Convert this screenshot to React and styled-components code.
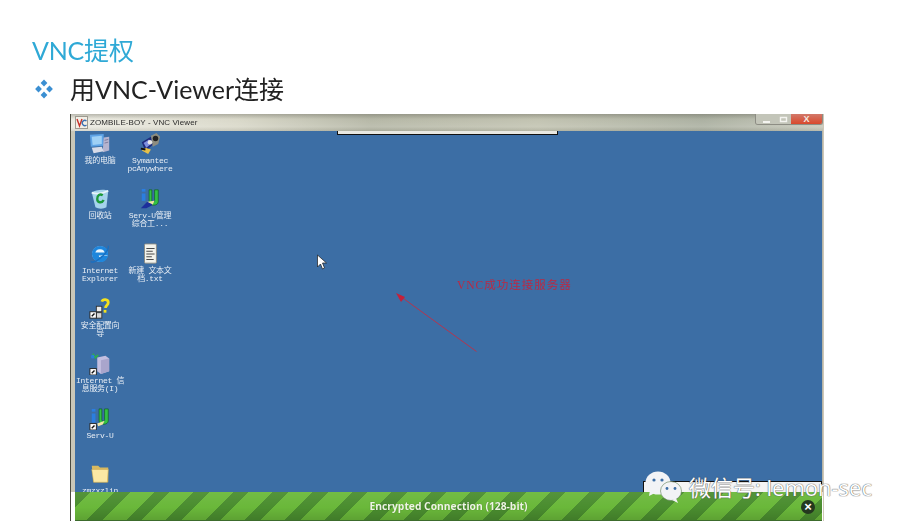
import React from 'react';
import styled, { createGlobalStyle } from 'styled-components';

const Global = createGlobalStyle`
  html, body { margin: 0; padding: 0; background: #fff; width: 900px; height: 528px; overflow: hidden; }
  #root { width: 900px; height: 528px; }
`;
const CJK = `"Noto Sans CJK SC", sans-serif`;
const Slide = styled.div`
  position: relative; width: 900px; height: 528px; background: #fff; overflow: hidden;
  display: flex; flex-direction: column; box-sizing: border-box; padding: 33px 0 0 32px;
`;
const Title = styled.h1`
  margin: 0; height: 35px; font: 400 25px/35px Lato, ${CJK}; color: #2fa9d6; letter-spacing: -0.2px; filter: blur(.3px);
`;
const Bullet = styled.div`
  display: flex; align-items: center; gap: 17px; height: 38px; margin-left: 3px; padding-top: 2px;
`;
const BulletText = styled.h2`
  margin: 0; font: 400 25px/38px Lato, ${CJK}; color: #222; letter-spacing: 0; filter: blur(.3px);
`;
const Win = styled.div`
  margin: 6px 0 0 38px; width: 754px; height: 407px; display: flex; flex-direction: column;
  border-left: 1px solid #4a4a40; border-right: 1px solid #cfc8b8; box-sizing: border-box; position: relative;
`;
const TitleBar = styled.div`
  height: 17px; flex: none; display: flex; align-items: center; gap: 2px; padding-left: 4px;
  position: relative;
  background:
    linear-gradient(180deg, rgba(90,90,80,.35) 0%, rgba(255,255,255,0) 30%, rgba(255,255,255,.12) 75%, rgba(80,80,70,.12) 100%),
    linear-gradient(90deg, #ecebe2 0%, #d9d8c9 22%, #b5b7a6 40%, #c2c3b1 62%, #abb0a1 84%, #c6c8ba 100%);
`;
const WinTitle = styled.span`
  font: 400 8px/17px "Liberation Sans", sans-serif; color: #2c2c2c; letter-spacing: .1px; filter: blur(.25px);
`;
const WinControls = styled.div`
  position: absolute; right: 0; top: 0; height: 10px; width: 66px; display: flex;
  border: 1px solid #8d8d84; border-top: none; border-radius: 0 0 3px 3px; box-sizing: content-box; overflow: hidden;
`;
const Ctl = styled.div`
  flex: ${p => p.$w}; display: flex; align-items: center; justify-content: center; overflow: hidden;
  font: 700 9px/10px "Liberation Sans", sans-serif; color: #f5e9e2;
  background: ${p => p.$bg};
`;
const Body = styled.div`
  flex: 1; min-height: 0; display: flex; position: relative; border-left: 4px solid #c9c7b8; border-right: 1px solid #b6b5a8;
`;
const Desktop = styled.div`
  flex: 1; background: #3c6ea5; position: relative; overflow: hidden;
  display: grid; grid-template-columns: 50px 50px; grid-auto-rows: 55px; justify-content: start;
  padding-top: 2px;
`;
const Cell = styled.div`
  grid-column: ${p => p.$c}; grid-row: ${p => p.$r};
  display: flex; flex-direction: column; align-items: center; width: 50px;
`;
const IconWrap = styled.div`
  width: 22px; height: 22px; flex: none; filter: blur(.35px);
  svg { display: block; width: 22px; height: 22px; }
`;
const Label = styled.div`
  width: 50px; margin-top: 2px; text-align: center; color: #e8eef5; white-space: pre-line;
  font: 400 8px/8px "Liberation Mono", ${CJK}; letter-spacing: -.3px; filter: blur(.35px);
`;
const TopStrip = styled.div`
  position: absolute; left: 262px; top: 0; width: 221px; height: 4px; background: #e8e8e2;
  border: 1px solid #111; border-top: none; box-sizing: border-box;
`;
const Anno = styled.div`
  position: absolute; left: 382px; top: 147px; color: #b92a45;
  font: 400 11.5px/14px "Liberation Serif", ${CJK}; letter-spacing: 1px; filter: blur(.3px);
`;
const Overlay = styled.svg`
  position: absolute; left: 0; top: 0; width: 748px; height: 360px; pointer-events: none;
`;
const BlackBar = styled.div`
  position: absolute; right: 0; bottom: 0; width: 179px; height: 11px; background: #f4f4f4;
  border: 1px solid #111; border-bottom: none; box-sizing: border-box;
`;
const Stripes = styled.div`
  height: 29px; flex: none; display: flex; align-items: center; justify-content: center;
  margin-left: 4px; margin-right: 1px; position: relative; box-sizing: border-box;
  border-bottom: 1px solid #3c6b2c;
  background:
    linear-gradient(180deg, rgba(255,255,255,.06) 0%, rgba(255,255,255,0) 55%, rgba(0,0,0,.12) 100%),
    repeating-linear-gradient(135deg, #4a8d2f 0 11px, #6ab83a 11px 28px);
`;
const StripeText = styled.span`
  font: 700 10.3px/14px "Open Sans", sans-serif; color: #eef5e4; filter: blur(.25px); text-shadow: 0 0 1px rgba(30,60,20,.5);
`;
const CloseBtn = styled.div`
  position: absolute; right: 7px; top: 8px; width: 14px; height: 14px; border-radius: 50%;
  background: #24381f; color: #fff; display: flex; align-items: center; justify-content: center;
  font: 700 13px/14px "Liberation Sans", sans-serif;
`;
const Watermark = styled.div`
  position: absolute; left: 645px; top: 470px; display: flex; align-items: center; gap: 6px;
`;
const WatermarkText = styled.span`
  font: 400 22px/24px "Open Sans", ${CJK}; color: #fff;
  text-shadow: 0 0 1px #555, 0 0 1px #555;
`;

const Diamonds = () => (
  <svg width="18" height="20" viewBox="0 0 18 20">
    {[[9, 4], [3.5, 10], [14.5, 10], [9, 16]].map(([x, y]) => (
      <path key={x + '-' + y} d={`M${x} ${y - 3.6}L${x + 3.4} ${y}L${x} ${y + 3.6}L${x - 3.4} ${y}Z`} fill="#3b8fd2" />
    ))}
  </svg>
);
const Computer = () => (
  <svg viewBox="0 0 24 24" width="24" height="24">
    <path d="M1 2l15-1v13L2 15z" fill="#5ea3e6" /><path d="M3 4l11-1v9L4 13z" fill="#9fd0f5" />
    <path d="M16 5l6-1v15l-7 2z" fill="#b5b4cf" /><path d="M17 8l4-1M17 11l4-1" stroke="#7b7a9b" />
    <path d="M3 16l11-1 2 5-11 2z" fill="#d7dbe8" />
  </svg>
);
const Symantec = () => (
  <svg viewBox="0 0 24 24" width="24" height="24">
    <path d="M3 10l10-6 3 8-9 8z" fill="#1d2a7c" /><path d="M5 11l6-4 2 5-5 4z" fill="#7d8fe0" />
    <path d="M13 3l6-3 4 4-2 8-6 3z" fill="#8d8d80" /><circle cx="18" cy="6" r="3" fill="#222" /><circle cx="12" cy="10" r="2.5" fill="#e8e8e8" />
    <path d="M3 19l7 4 3-5-6-2z" fill="#e7c14a" /><path d="M2 17l5 1" stroke="#111" strokeWidth="2" />
  </svg>
);
const Bin = () => (
  <svg viewBox="0 0 24 24" width="24" height="24">
    <path d="M3 5c4-3 13-4 18-2l-2 18c-3 2-9 2-12 0z" fill="#a6d3ec" /><path d="M3 5c5 2 12 1 18-2" stroke="#e7f3fa" strokeWidth="2" fill="none" />
    <path d="M15 8c-3-2-6 0-6 4s5 5 7 1" stroke="#1c9a3a" strokeWidth="2.6" fill="none" />
  </svg>
);
const ServU = () => (
  <svg viewBox="0 0 24 24" width="24" height="24">
    <path d="M11 2h3v12c0 2 3 2 3 0V2h4v13c0 5-10 5-10 0z" fill="#33c243" stroke="#0e5a1a" strokeWidth=".7" />
    <rect x="3" y="1" width="4" height="3" fill="#2b7ee0" /><rect x="3" y="6" width="4" height="8" fill="#2b7ee0" />
    <path d="M2 22l7-7 6 1-1 3-6 3z" fill="#1d2f9c" /><path d="M9 15l8-1-2 4z" fill="#efe6a5" />
  </svg>
);
const IE = () => (
  <svg viewBox="0 0 24 24" width="24" height="24">
    <circle cx="12" cy="12" r="8.5" fill="#eaf5fd" />
    <path d="M5 12h14c0-5-3-7-7-7s-7 3-7 7 3 7 7 7c3 0 5-1 6-3h-4c-2 2-5 1-5-2h-3" fill="none" stroke="#1e86dc" strokeWidth="3.5" />
    <path d="M2 20c1 2 6 0 11-4s9-10 8-13" fill="none" stroke="#1a6fc0" strokeWidth="1.5" />
  </svg>
);
const Note = () => (
  <svg viewBox="0 0 24 24" width="24" height="24">
    <rect x="6" y="1" width="13" height="21" rx="1" fill="#f3f3ec" stroke="#8a8a82" />
    <path d="M8 6h9M8 9h7M8 12h9M8 15h6M8 18h8" stroke="#3a3a3a" />
  </svg>
);
const Wizard = () => (
  <svg viewBox="0 0 24 24" width="24" height="24">
    <path d="M14 4c1-3 7-3 7 1 0 3-3 3-3 6" fill="none" stroke="#f4e21c" strokeWidth="3" /><rect x="16" y="13" width="3" height="3" fill="#f4e21c" />
    <rect x="8" y="9" width="6" height="6" fill="#ececec" stroke="#333" /><rect x="8" y="16" width="6" height="6" fill="#d8d8d8" stroke="#333" />
    <rect x="1" y="15" width="7" height="7" fill="#fff" stroke="#222" /><path d="M3 20l3-3" stroke="#111" strokeWidth="1.5" />
  </svg>
);
const Server = () => (
  <svg viewBox="0 0 24 24" width="24" height="24">
    <path d="M9 5l9-2 4 3v14l-9 3-4-3z" fill="#c3bfe0" /><path d="M13 8l9-2v14l-9 3z" fill="#a9a5cc" />
    <path d="M4 1l3 4 3-3" stroke="#2fae4a" strokeWidth="2" fill="none" /><circle cx="4" cy="4" r="2" fill="#2a7fd8" />
    <rect x="1" y="17" width="7" height="7" fill="#fff" stroke="#222" /><path d="M3 22l3-3" stroke="#111" strokeWidth="1.5" />
  </svg>
);
const ServUShort = () => (
  <svg viewBox="0 0 24 24" width="24" height="24">
    <path d="M11 1h3v12c0 2 3 2 3 0V1h4v13c0 5-10 5-10 0z" fill="#33c243" stroke="#0e5a1a" strokeWidth=".7" />
    <rect x="3" y="1" width="4" height="3" fill="#2b7ee0" /><rect x="3" y="6" width="4" height="10" fill="#2b7ee0" />
    <rect x="1" y="17" width="7" height="7" fill="#fff" stroke="#222" /><path d="M3 22l3-3" stroke="#111" strokeWidth="1.5" />
    <path d="M9 17l8-3-2 4-5 2z" fill="#efe6a5" />
  </svg>
);
const Folder = () => (
  <svg viewBox="0 0 24 24" width="24" height="24">
    <path d="M3 3h7l2 2h9v16H5z" fill="#d8b95f" /><path d="M3 7h18l-1 14H5z" fill="#fbe8a4" stroke="#c9a94f" strokeWidth=".6" />
  </svg>
);
const Bubbles = () => (
  <svg width="38" height="34" viewBox="0 0 38 34">
    <ellipse cx="13" cy="13" rx="12.5" ry="11.5" fill="#f2f3f6" />
    <path d="M5 20l-1 6 6-3z" fill="#f2f3f6" />
    <circle cx="9" cy="10" r="1.6" fill="#3c6ea5" /><circle cx="17" cy="10" r="1.6" fill="#3c6ea5" />
    <ellipse cx="26" cy="21" rx="10.5" ry="9.5" fill="#f2f3f6" stroke="#5f7f55" strokeWidth=".6" />
    <path d="M31 28l2 5-6-3z" fill="#f2f3f6" />
    <circle cx="22" cy="18.5" r="1.4" fill="#3c6ea5" /><circle cx="30" cy="18.5" r="1.4" fill="#3c6ea5" />
  </svg>
);

const icons = [
  { c: 1, r: 1, I: Computer, t: '我的电脑' },
  { c: 2, r: 1, I: Symantec, t: 'Symantec\npcAnywhere' },
  { c: 1, r: 2, I: Bin, t: '回收站' },
  { c: 2, r: 2, I: ServU, t: 'Serv-U管理\n综合工...' },
  { c: 1, r: 3, I: IE, t: 'Internet\nExplorer' },
  { c: 2, r: 3, I: Note, t: '新建 文本文\n档.txt' },
  { c: 1, r: 4, I: Wizard, t: '安全配置向\n导' },
  { c: 1, r: 5, I: Server, t: 'Internet 信\n息服务(I)' },
  { c: 1, r: 6, I: ServUShort, t: 'Serv-U' },
  { c: 1, r: 7, I: Folder, t: 'zmzxzlin' },
];

export default function App() {
  return (
    <Slide>
      <Global />
      <Title>VNC提权</Title>
      <Bullet>
        <Diamonds />
        <BulletText>用VNC-Viewer连接</BulletText>
      </Bullet>
      <Win>
        <TitleBar>
          <svg width="13" height="13" viewBox="0 0 13 13">
            <rect x=".5" y=".5" width="12" height="12" fill="#f3efe6" stroke="#9c9a90" />
            <path d="M2 3l2.5 7L7 3" fill="none" stroke="#c8322a" strokeWidth="1.4" />
            <path d="M11.5 5a2.6 2.6 0 1 0 0 4" fill="none" stroke="#3a6fb0" strokeWidth="1.3" />
          </svg>
          <WinTitle>ZOMBILE-BOY - VNC Viewer</WinTitle>
          <WinControls>
            <Ctl $w={20} $bg="#c3c5b9"><svg width="9" height="7" viewBox="0 0 9 7"><path d="M1 6h7" stroke="#f4f4f0" strokeWidth="2" /></svg></Ctl>
            <Ctl $w={15} $bg="#c3c5b9"><svg width="9" height="7" viewBox="0 0 9 7"><path d="M1.5 1.5h6v4h-6z" fill="none" stroke="#f4f4f0" strokeWidth="1.4" /></svg></Ctl>
            <Ctl $w={31} $bg="linear-gradient(180deg,#d2796a,#d9482c)">X</Ctl>
          </WinControls>
        </TitleBar>
        <Body>
          <Desktop>
            {icons.map(({ c, r, I, t }) => (
              <Cell key={t} $c={c} $r={r}>
                <IconWrap><I /></IconWrap>
                <Label>{t}</Label>
              </Cell>
            ))}
            <TopStrip />
            <Anno>VNC成功连接服务器</Anno>
            <Overlay viewBox="0 0 748 360">
              <path d="M401.5 220.5L325 165" stroke="#b3354f" strokeWidth="1" fill="none" />
              <path d="M321 162l9 4-4 5z" fill="#c5203a" />
              <path d="M242.5 124v12l3-3 2 5 2-1-2-5h4z" fill="#fff" stroke="#1b1b1b" strokeWidth=".7" />
            </Overlay>
            <BlackBar />
          </Desktop>
        </Body>
        <Stripes>
          <StripeText>Encrypted Connection (128-bit)</StripeText>
          <CloseBtn>×</CloseBtn>
        </Stripes>
      </Win>
      <Watermark>
        <Bubbles />
        <WatermarkText>微信号: lemon-sec</WatermarkText>
      </Watermark>
    </Slide>
  );
}
